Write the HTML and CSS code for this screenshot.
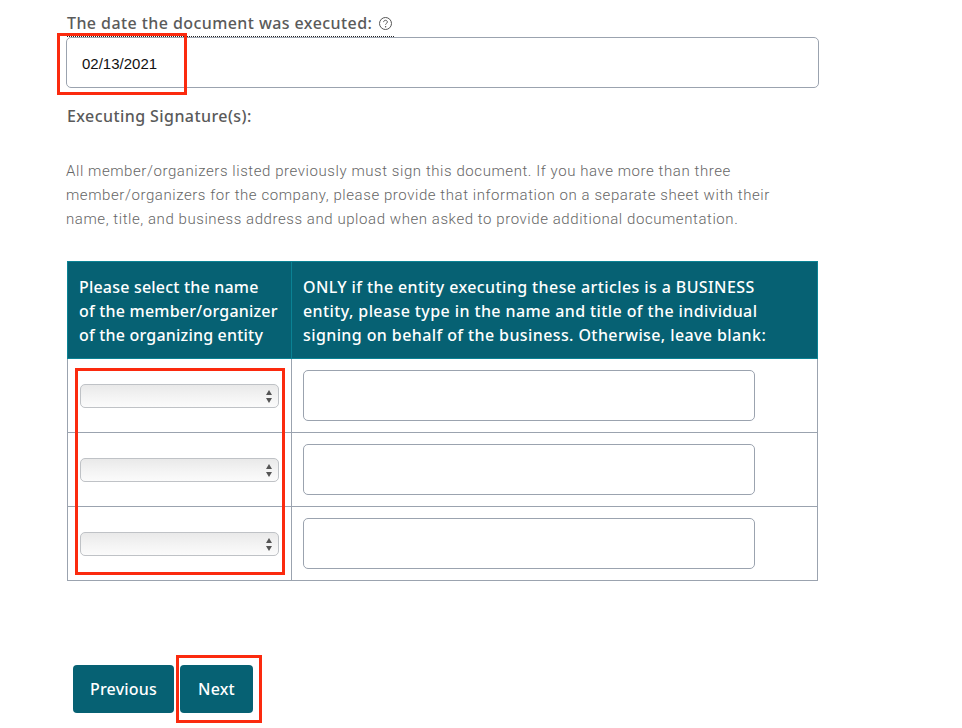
FILE: index.html
```html
<!DOCTYPE html>
<html lang="en">
<head>
<meta charset="utf-8">
<title>Executing Signatures</title>
<link rel="stylesheet" href="styles.css">
</head>
<body>
<main class="form">
  <label class="label date-label"><span class="tip">The date the document was executed:
    <svg class="help" width="13" height="13" viewBox="0 0 13 13" aria-hidden="true"><circle cx="6.5" cy="6.5" r="6" fill="none" stroke="#555" stroke-width="1"/><path d="M4.6 5.1c0-1.1.9-1.8 1.9-1.8s1.9.7 1.9 1.7c0 1.3-1.8 1.3-1.8 2.7" fill="none" stroke="#555" stroke-width="1"/><circle cx="6.6" cy="9.7" r=".7" fill="#555"/></svg></span></label>
  <input class="text-input date-input" type="text" value="02/13/2021">
  <h2 class="label sig-label">Executing Signature(s):</h2>
  <p class="note">All member/organizers listed previously must sign this document. If you have more than three member/organizers for the company, please provide that information on a separate sheet with their name, title, and business address and upload when asked to provide additional documentation.</p>
  <table class="sig-table">
    <thead>
      <tr>
        <th class="col-a">Please select the name<br>of the member/organizer<br>of the organizing entity</th>
        <th class="col-b">ONLY if the entity executing these articles is a BUSINESS entity, please type in the name and title of the individual signing on behalf of the business. Otherwise, leave blank:</th>
      </tr>
    </thead>
    <tbody>
      <tr>
        <td><div class="select"><span class="arrows"></span></div></td>
        <td><input class="text-input row-input" type="text"></td>
      </tr>
      <tr>
        <td><div class="select"><span class="arrows"></span></div></td>
        <td><input class="text-input row-input" type="text"></td>
      </tr>
      <tr>
        <td><div class="select"><span class="arrows"></span></div></td>
        <td><input class="text-input row-input" type="text"></td>
      </tr>
    </tbody>
  </table>
  <div class="actions">
    <button class="btn btn-prev" type="button">Previous</button>
    <button class="btn btn-next" type="button">Next</button>
  </div>
</main>
<div class="mark mark-date"></div>
<div class="mark mark-selects"></div>
<div class="mark mark-next"></div>
</body>
</html>
```
FILE: styles.css
```css
* { box-sizing: border-box; }
html, body { margin: 0; padding: 0; background: #fff; }
body { height: 728px; overflow: hidden; position: relative; font-family: "Noto Sans", sans-serif; }
.form { padding: 13px 0 0 67px; width: 819px; }
.label { display: block; margin: 0; font-size: 16px; font-weight: 500; line-height: 20px; color: #5a5a5a; letter-spacing: .42px; }
.tip { display: inline-block; height: 24px; border-bottom: 1px dotted #222; width: 327px; white-space: nowrap; }
.help { vertical-align: -1px; margin-left: 2px; }
.date-label { height: 24px; }
.text-input { display: block; background: #fff; border: 1px solid #9ba3af; border-radius: 5px; font-family: "Liberation Sans", sans-serif; font-size: 15px; color: #111; outline: none; }
.date-input { width: 753px; height: 51px; margin-left: -1px; padding: 1px 15px 0; }
.sig-label { margin-top: 18px; }
.note { margin: 33px 0 0 -1px; width: 720px; font-family: "Roboto", sans-serif; font-weight: 300; font-size: 15px; line-height: 24px; color: #666; letter-spacing: .57px; }
.sig-table { margin-top: 30px; width: 751px; border-collapse: collapse; table-layout: fixed; }
.sig-table th { background: #066173; color: #fff; border: 1px solid #0b8294; padding: 13px 11px 11px; text-align: left; font-size: 16px; font-weight: 500; line-height: 24px; letter-spacing: .4px; vertical-align: top; }
.sig-table .col-a { width: 224px; padding-right: 0; white-space: nowrap; letter-spacing: .2px; }
.sig-table .col-b { padding-right: 30px; }
.sig-table td { border: 1px solid #9ba3af; height: 74px; padding: 0 0 0 11px; vertical-align: middle; }
.select { position: relative; width: 199px; height: 24px; margin-left: 1px; margin-top: 1px; border: 1px solid #bfc2c6; border-radius: 5px; background: linear-gradient(#e9e9e9, #f3f3f3 50%, #fbfbfb); }
.arrows { position: absolute; right: 5px; top: 5px; width: 7px; height: 13px; }
.arrows::before, .arrows::after { content: ""; position: absolute; left: 0; border-left: 3.5px solid transparent; border-right: 3.5px solid transparent; }
.arrows::before { top: 0; border-bottom: 5px solid #555; }
.arrows::after { bottom: 0; border-top: 5px solid #555; }
.row-input { width: 452px; height: 51px; }
.actions { display: flex; gap: 6px; margin: 84px 0 0 6px; }
.btn { height: 48px; border: 0; border-radius: 4px; background: #066173; color: #fff; font-family: "Noto Sans", sans-serif; font-size: 16px; font-weight: 500; padding: 0; letter-spacing: .2px; }
.btn-prev { width: 101px; }
.btn-next { width: 73px; }
.mark { position: absolute; border: 3px solid #fb2a0e; }
.mark-date { left: 57px; top: 33px; width: 130px; height: 62px; }
.mark-selects { left: 75px; top: 368px; width: 210px; height: 207px; }
.mark-next { left: 176px; top: 655px; width: 86px; height: 68px; }
```
